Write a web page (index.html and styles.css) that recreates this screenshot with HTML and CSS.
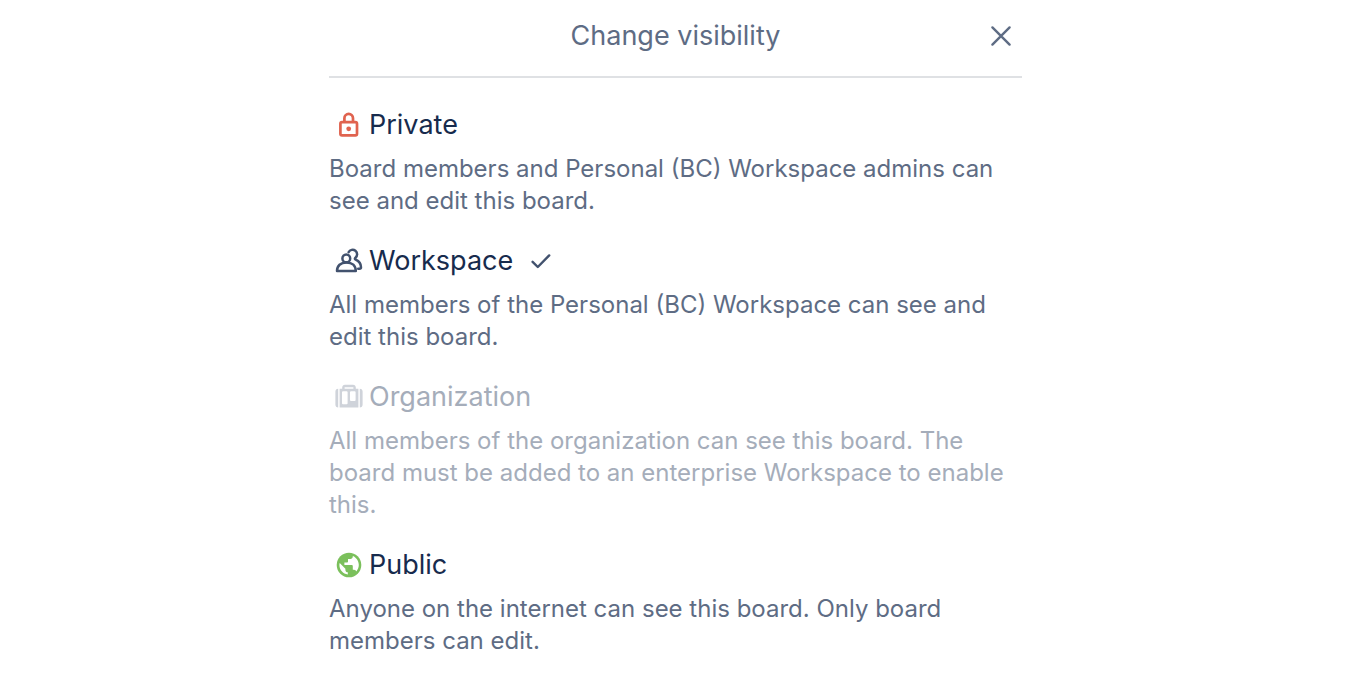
FILE: index.html
```html
<!DOCTYPE html>
<html lang="en">
<head>
    <meta charset="utf-8">
    <meta name="viewport" content="width=device-width, initial-scale=1">
    <title>Change visibility</title>
    <link rel="stylesheet" href="styles.css">
</head>
<body>
    <section class="popover">
        <header class="popover-header">
            <h2>Change visibility</h2>
            <button type="button" class="close" aria-label="Close">
                <svg width="22" height="22" viewBox="0 0 22 22" fill="none" stroke="currentColor" stroke-width="2.4" stroke-linecap="round">
                    <path d="M2.4 2.4l17.200 17.200M19.600 2.400l-17.200 17.200"/>
                </svg>
            </button>
        </header>

        <ul class="options">
            <li>
                <button type="button" class="option">
                    <span class="option-name">
                        <svg class="icon private" viewBox="0 0 28 28" fill="none" stroke="currentColor" stroke-width="2.7">
                            <rect x="5.4" y="11.2" width="16.6" height="13.2" rx="1.6"/>
                            <path d="M9.4 11V7.2a4.300 4.300 0 0 1 8.600 0V11"/>
                            <circle cx="13.7" cy="17.8" r="2.400" fill="currentColor" stroke="none"/>
                        </svg>
                        Private
                    </span>
                    <span class="option-text">Board members and Personal (BC) Workspace admins can see and edit this board.</span>
                </button>
            </li>
            <li>
                <button type="button" class="option">
                    <span class="option-name">
                        <svg class="icon workspace" viewBox="0 0 28 28" fill="none" stroke="currentColor" stroke-width="2.5" stroke-linejoin="round" stroke-linecap="round">
                            <circle cx="11.300" cy="11.400" r="3.900"/>
                            <path d="M2 24.100c0-5.400 3.600-8.700 9.400-8.700s9.400 3.300 9.400 8.700z"/>
                            <path d="M13.600 5.200a4.500 4.500 0 1 1 6.900 5.500c-.9.900-.8 1.500.2 2 3.200 1.500 5.300 4 5.300 7.500 0 1-.5 1.500-1.500 1.500h-1.300"/>
                        </svg>
                        Workspace
                        <svg class="check" width="20" height="16" viewBox="0 0 20 16" fill="none" stroke="currentColor" stroke-width="2.4" stroke-linecap="round" stroke-linejoin="round">
                            <path d="M1.600 8.800l5.200 5.200L18.200 2.400"/>
                        </svg>
                    </span>
                    <span class="option-text">All members of the Personal (BC) Workspace can see and edit this board.</span>
                </button>
            </li>
            <li>
                <button type="button" class="option" disabled>
                    <span class="option-name">
                        <svg class="icon organization" viewBox="0 0 28 28" fill="currentColor">
                            <path d="M3.200 5.800v18.800C1.400 24.600.4 23.400.4 21.800V8.600c0-1.600 1-2.800 2.800-2.800zM24.800 5.800c1.800 0 2.800 1.200 2.800 2.800v13.200c0 1.600-1 2.800-2.800 2.800z"/>
                            <path fill-rule="evenodd" d="M4.600 5.800h2.600V4.600c0-1.700 1.100-2.800 2.800-2.800h8c1.700 0 2.800 1.100 2.800 2.800v1.200h2.600v18.800H4.600zM9.600 5.800h8.800V4.200H9.600zM8 8.200a1 1 0 0 0-1 1v11a1 1 0 0 0 1 1h3.600a1 1 0 0 0 1-1v-11a1 1 0 0 0-1-1zM16 8.200a1 1 0 0 0-1 1v7.800a1 1 0 0 0 1 1h3.600a1 1 0 0 0 1-1V9.200a1 1 0 0 0-1-1z"/>
                        </svg>
                        Organization
                    </span>
                    <span class="option-text">All members of the organization can see this board. The board must be added to an enterprise Workspace to enable this.</span>
                </button>
            </li>
            <li>
                <button type="button" class="option">
                    <span class="option-name">
                        <svg class="icon public" viewBox="0 0 28 28">
                            <circle cx="14" cy="14" r="12.300" fill="currentColor"/>
                            <path fill="#fff" d="M4.700 12l5.700 5.700v1.200c0 1.300 1.100 2.400 2.400 2.400v2.200C8 22.900 4.400 18.900 4.400 14c0-.7.100-1.400.3-2zM21.300 20.500c-.3-1-1.200-1.700-2.300-1.700h-1.200v-3.600c0-.7-.5-1.200-1.200-1.200H9.400v-2.400h2.400c.7 0 1.200-.5 1.200-1.200V8h2.400c1.300 0 2.400-1.100 2.400-2.400v-.5c3.500 1.400 6 4.900 6 8.900 0 2.500-1 4.800-2.500 6.500z"/>
                        </svg>
                        Public
                    </span>
                    <span class="option-text">Anyone on the internet can see this board. Only board members can edit.</span>
                </button>
            </li>
        </ul>
    </section>
</body>
</html>
```
FILE: styles.css
```css
* {
    box-sizing: border-box;
}

body {
    margin: 0;
    background-color: #ffffff;
    color: #172b4d;
    font-family: Inter, "Liberation Sans", sans-serif;
}

.popover {
    max-width: 693px;
    margin: 0 auto;
}

.popover-header {
    display: grid;
    grid-template-columns: 42px 1fr 42px;
    align-items: center;
    padding: 12px 0 16px;
    border-bottom: 2px solid #dfe1e4;
    color: #5e6c84;
}

.popover-header h2 {
    grid-column: 2;
    margin: 0;
    font-size: 27px;
    font-weight: 400;
    line-height: 48px;
    text-align: center;
}

.close {
    display: flex;
    align-items: center;
    justify-content: center;
    height: 48px;
    padding: 0;
    border: 0;
    background: none;
    color: inherit;
    cursor: pointer;
}

.options {
    display: flex;
    flex-direction: column;
    gap: 24px;
    margin: 0;
    padding: 27px 0 24px;
    list-style: none;
}

.option {
    display: flex;
    flex-direction: column;
    gap: 8px;
    width: 100%;
    padding: 0;
    border: 0;
    background: none;
    color: inherit;
    font: inherit;
    text-align: left;
    cursor: pointer;
}

.option-name {
    display: flex;
    align-items: center;
    gap: 6px;
    padding-left: 6px;
    font-size: 27px;
    line-height: 40px;
}

.option-text {
    color: #5e6c84;
    font-size: 24px;
    line-height: 32px;
}

.option:disabled,
.option:disabled .option-text {
    color: #a5adba;
    cursor: default;
}

.icon {
    flex: none;
    width: 28px;
    height: 28px;
}

.check {
    margin-left: 12px;
    color: #42526e;
}

.private {
    color: #e0634f;
}

.workspace {
    color: #42526e;
}

.organization {
    color: #cfd3da;
}

.public {
    color: #7bc05c;
}
```
